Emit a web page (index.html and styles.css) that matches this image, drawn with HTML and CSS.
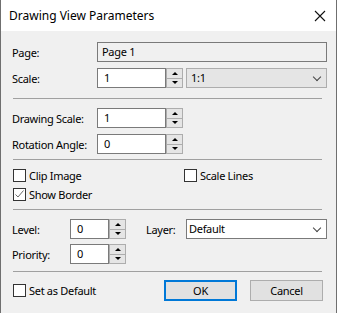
FILE: index.html
```html
<!DOCTYPE html>
<html lang="en">
<head>
    <meta charset="UTF-8">
    <title>Drawing View Parameters</title>
    <link rel="stylesheet" href="styles.css">
</head>
<body>
    <div class="dialog">
        <div class="titlebar">
            <span class="title">Drawing View Parameters</span>
            <svg class="close" width="12" height="12" viewBox="0 0 12 12">
                <path d="M1 1L11 11M11 1L1 11" stroke="#111" stroke-width="1.1" fill="none"/>
            </svg>
        </div>
        <div class="content">
            <div class="row">
                <span class="label">Page:</span>
                <div class="readonly">Page 1</div>
            </div>
            <div class="row gap-top">
                <span class="label">Scale:</span>
                <div class="spin">
                    <div class="spin-edit">1</div>
                    <div class="spin-btns"><span class="up"></span><span class="down"></span></div>
                </div>
                <div class="combo disabled">1:1<span class="chevron"></span></div>
            </div>

            <div class="sep sep1"></div>

            <div class="row">
                <span class="label">Drawing Scale:</span>
                <div class="spin">
                    <div class="spin-edit">1</div>
                    <div class="spin-btns"><span class="up"></span><span class="down"></span></div>
                </div>
            </div>
            <div class="row gap-top">
                <span class="label">Rotation Angle:</span>
                <div class="spin">
                    <div class="spin-edit">0</div>
                    <div class="spin-btns"><span class="up"></span><span class="down"></span></div>
                </div>
            </div>

            <div class="sep sep2"></div>

            <div class="check-row">
                <label class="check wide"><span class="box"></span>Clip Image</label>
                <label class="check"><span class="box"></span>Scale Lines</label>
            </div>
            <div class="check-row gap-top">
                <label class="check"><span class="box checked">
                    <svg width="11" height="11" viewBox="0 0 11 11"><path d="M1.5 5.5L4 8L9.5 1.5" stroke="#6a6a6a" stroke-width="1" fill="none"/></svg>
                </span>Show Border</label>
            </div>

            <div class="sep sep3"></div>

            <div class="row">
                <span class="label short">Level:</span>
                <div class="spin small">
                    <div class="spin-edit">0</div>
                    <div class="spin-btns"><span class="up"></span><span class="down"></span></div>
                </div>
                <span class="label layer">Layer:</span>
                <div class="combo white">Default<span class="chevron"></span></div>
            </div>
            <div class="row gap-prio">
                <span class="label short">Priority:</span>
                <div class="spin small">
                    <div class="spin-edit">0</div>
                    <div class="spin-btns"><span class="up"></span><span class="down"></span></div>
                </div>
            </div>

            <div class="sep sep4"></div>

            <div class="footer">
                <label class="check"><span class="box"></span>Set as Default</label>
                <div class="buttons">
                    <button class="btn default">OK</button>
                    <button class="btn">Cancel</button>
                </div>
            </div>
        </div>
    </div>
</body>
</html>
```

FILE: styles.css
```css
body {
    margin: 0;
    font-family: "Noto Sans", sans-serif;
    font-size: 11px;
    color: #000;
    background: #f0f0f0;
}
.dialog {
    width: 337px;
    height: 313px;
    box-sizing: border-box;
    border-left: 1px solid #6f6f6f;
    border-right: 1px solid #6f6f6f;
    background: #f0f0f0;
    overflow: hidden;
}
.titlebar {
    height: 31px;
    background: #fff;
    display: flex;
    align-items: center;
    justify-content: space-between;
    padding: 0 10px 0 8px;
    font-size: 12px;
}
.title {
    margin-top: -1px;
}
.content {
    padding: 11px 9px 0 11px;
    letter-spacing: -0.3px;
}
.row {
    display: flex;
    align-items: center;
    height: 20px;
}
.gap-top {
    margin-top: 6px;
}
.gap-prio {
    margin-top: 5px;
}
.label {
    width: 85px;
    flex: none;
}
.label.short {
    width: 58px;
}
.label.layer {
    width: 40px;
    margin-left: 20px;
}
.readonly {
    flex: 1;
    height: 20px;
    box-sizing: border-box;
    border: 1px solid #7a7a7a;
    background: #f0f0f0;
    padding-left: 4px;
    line-height: 18px;
}
.spin {
    display: flex;
    width: 86px;
    height: 20px;
    flex: none;
}
.spin.small {
    width: 56px;
}
.spin-edit {
    flex: 1;
    box-sizing: border-box;
    border: 1px solid #7a7a7a;
    background: #fff;
    padding-left: 6px;
    line-height: 18px;
}
.spin-btns {
    width: 17px;
    flex: none;
    box-sizing: border-box;
    border: 1px solid #adadad;
    border-left: none;
    display: flex;
    flex-direction: column;
    background: #fff;
}
.spin-btns span {
    flex: 1;
    background: #e5e5e5;
    border-left: 1px solid #adadad;
    display: flex;
    align-items: center;
    justify-content: center;
}
.spin-btns .up {
    border-bottom: 1px solid #adadad;
}
.spin-btns .up::after {
    content: "";
    border-left: 3px solid transparent;
    border-right: 3px solid transparent;
    border-bottom: 3px solid #000;
}
.spin-btns .down::after {
    content: "";
    border-left: 3px solid transparent;
    border-right: 3px solid transparent;
    border-top: 3px solid #000;
}
.combo {
    position: relative;
    height: 20px;
    width: 141px;
    flex: none;
    box-sizing: border-box;
    line-height: 18px;
}
.row .combo.disabled {
    margin-left: 3px;
    background: #e5e5e5;
    border: 1px solid #adadad;
    padding-left: 4px;
}
.combo.white {
    background: #fff;
    border: 1px solid #7a7a7a;
    padding-left: 2px;
}
.chevron {
    position: absolute;
    right: 6px;
    top: 5px;
    width: 5px;
    height: 5px;
    border-right: 1px solid #444;
    border-bottom: 1px solid #444;
    transform: rotate(45deg);
}
.sep {
    height: 1px;
    background: #a0a0a0;
    margin-left: 1px;
    margin-right: 5px;
}
.sep1 {
    margin-top: 10px;
    margin-bottom: 9px;
}
.sep2 {
    margin-top: 5px;
    margin-bottom: 9px;
}
.sep3 {
    margin-top: 8px;
    margin-bottom: 9px;
}
.sep4 {
    margin-top: 7px;
    margin-bottom: 8px;
}
.check-row {
    display: flex;
    height: 13px;
    align-items: center;
}
.check {
    display: flex;
    align-items: center;
    margin-left: 1px;
    line-height: 13px;
}
.check.wide {
    width: 170px;
}
.box {
    width: 13px;
    height: 13px;
    box-sizing: border-box;
    border: 1px solid #333;
    background: #fff;
    margin-right: 3px;
    display: flex;
    align-items: center;
    justify-content: center;
}
.footer {
    display: flex;
    align-items: center;
    justify-content: space-between;
    height: 21px;
    padding-right: 4px;
}
.buttons {
    display: flex;
    gap: 13px;
}
.btn {
    width: 73px;
    height: 21px;
    box-sizing: border-box;
    background: #e1e1e1;
    border: 1px solid #adadad;
    font-family: inherit;
    font-size: 11px;
    letter-spacing: inherit;
    padding: 0;
    color: #000;
}
.btn.default {
    border: 2px solid #0078d7;
}
```
